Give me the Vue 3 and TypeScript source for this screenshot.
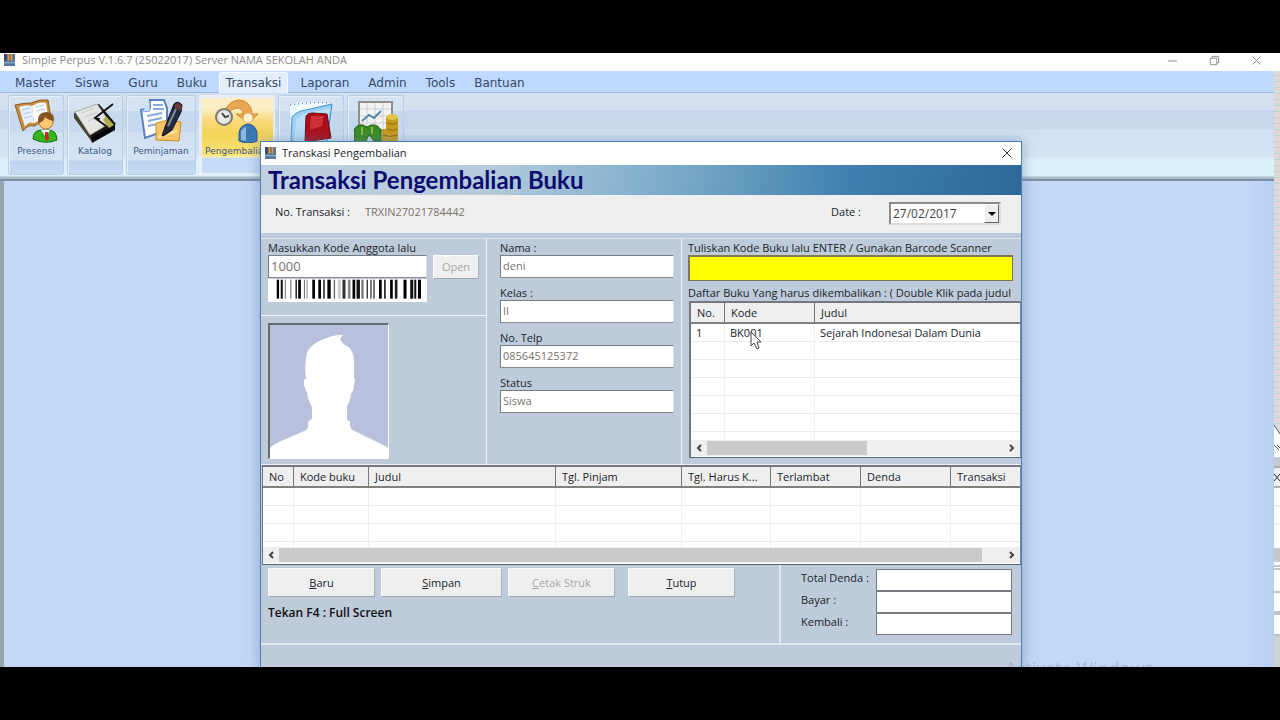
<script setup lang="ts">
import { ref } from 'vue'

const menus: string[] = ['Master', 'Siswa', 'Guru', 'Buku', 'Transaksi', 'Laporan', 'Admin', 'Tools', 'Bantuan']
const activeMenu = ref('Transaksi')

const transactionNo = ref('TRXIN27021784442')
const date = ref('27/02/2017')
const memberCode = ref('1000')
const bookCode = ref('')

interface Field { id: string; label: string; value: string }
const memberFields = ref<Field[]>([
  { id: 'nama', label: 'Nama :', value: 'deni' },
  { id: 'kelas', label: 'Kelas :', value: 'II' },
  { id: 'telp', label: 'No. Telp', value: '085645125372' },
  { id: 'status', label: 'Status', value: 'Siswa' },
])

const totals = ref<Field[]>([
  { id: 'total', label: 'Total Denda :', value: '' },
  { id: 'bayar', label: 'Bayar :', value: '' },
  { id: 'kembali', label: 'Kembali :', value: '' },
])

const loans = [{ no: '1', kode: 'BK001', judul: 'Sejarah Indonesai Dalam Dunia' }]
const loanBlankRows = 6
const returnColumns: string[] = ['No', 'Kode buku', 'Judul', 'Tgl. Pinjam', 'Tgl. Harus K...', 'Terlambat', 'Denda', 'Transaksi']
const returnBlankRows = 4

/* [start, width, shade] of each bar, in thirds of a pixel */
const bars: [number, number, string][] = [
  [26, 7, '#000'], [38, 6, '#111'], [50, 3, '#777'], [66, 4, '#888'], [82, 4, '#111'], [90, 8, '#000'],
  [107, 3, '#666'], [115, 3, '#888'], [132, 8, '#000'], [150, 8, '#000'], [164, 6, '#555'], [177, 10, '#000'],
  [196, 4, '#666'], [208, 9, '#ccc'], [222, 9, '#333'], [238, 8, '#888'], [252, 8, '#000'], [264, 10, '#111'],
  [278, 7, '#777'], [294, 4, '#333'], [305, 4, '#444'], [314, 4, '#333'], [331, 8, '#000'], [346, 5, '#222'],
  [364, 8, '#000'], [378, 8, '#222'], [404, 9, '#000'], [424, 9, '#111'], [436, 6, '#111'], [447, 9, '#000'],
]
</script>

<template>
  <div class="screen">
    <main class="desktop">
      <header class="titlebar">
        <svg class="app-icon" viewBox="0 0 12 13"><rect width="12" height="13" fill="#52779a" /><path d="M0 0h3v7H0z" fill="#3b4a5a" /><path d="M4 0h5v8L6.500 6 4 8z" fill="#d79a55" /><path d="M6 0h1v6H6z" fill="#6a4a30" /><path d="M0 9h12v1H0z" fill="#a9c4d6" /></svg>
        <span class="app-title">Simple Perpus V.1.6.7 (25022017) Server NAMA SEKOLAH ANDA</span>
        <div class="window-buttons">
          <button aria-label="Minimize"><svg viewBox="0 0 12 12"><path d="M1 6.500h10" /></svg></button>
          <button aria-label="Restore"><svg viewBox="0 0 12 12"><path d="M1.500 3.500h7v7h-7zM3.500 3.500v-2h7v7h-2" /></svg></button>
          <button aria-label="Close"><svg viewBox="0 0 12 12"><path d="M1.500 1.500l9 9M10.500 1.500l-9 9" /></svg></button>
        </div>
      </header>

      <nav class="menubar">
        <button v-for="m in menus" :key="m" :class="{ active: m === activeMenu }" @click="activeMenu = m">{{ m }}</button>
      </nav>

      <section class="ribbon">
        <button class="tool tool-presensi">
          <svg viewBox="0 0 44 44">
            <path d="M1 6Q9 4 17 4Q25 0 34 1L38 25Q27 22 20 27Q14 25 9 32Z" fill="#c98c3b" stroke="#8b5a22" />
            <path d="M5 8Q12 5 18 7L20 24Q14 22 11 28Z" fill="#e8f1ff" /><path d="M18 7Q25 2 32 4L35 23Q27 20 20 24Z" fill="#fbfdff" />
            <path d="M8 11l8-2M9 15l8-2M10 19l8-2M21 8l9-2M22 12l9-2" stroke="#a9c4ee" fill="none" />
            <path d="M19 40q0-9 9-9h7q8 1 8 10q-12 5-24-1z" fill="#35b51e" stroke="#16700f" />
            <path d="M27 31h9l-4 7z" fill="#fff" /><path d="M31 33h3l1 7-2 2-2-2z" fill="#c8272a" />
            <circle cx="32" cy="23" r="7" fill="#ffc970" stroke="#b97a32" /><path d="M24 24q-1-11 9-11 8 1 7 9-6-1-9-4-1 5-7 6z" fill="#875423" />
          </svg>
          <span>Presensi</span>
        </button>
        <button class="tool tool-katalog">
          <svg viewBox="0 0 44 44">
            <path d="M1 14L19 38v5L1 19z" fill="#4d4a2c" /><path d="M18 38L42 25v6L19 44z" fill="#050505" />
            <path d="M1 14L26 5l17 20-25 14z" fill="#171713" /><path d="M2 13L24 5l13 19-20 12z" fill="#e3e5e3" stroke="#aaa" />
            <path d="M9 14l12-5M12 18l12-5M15 22l8-4" stroke="#c3c6c5" /><path d="M33 17l8 9-5 3-6-8z" fill="#b5a94f" />
            <path d="M40 5L22 19l11 8" stroke="#151515" stroke-width="2" fill="none" /><path d="M22 19l5 0-1 3z" fill="#000" />
          </svg>
          <span>Katalog</span>
        </button>
        <button class="tool tool-peminjaman">
          <svg viewBox="0 0 44 44">
            <path d="M2 11l9-2V1h14l3 8v22l-22 8z" fill="#fff" stroke="#5b80bd" stroke-width="2" /><path d="M11 2v10l-8 1" fill="#c5dcfa" stroke="#7da2da" />
            <path d="M8 17l15-3M9 22l14-3M9 27l10-2M14 6h10M14 10h11" stroke="#86abe0" stroke-width="2" />
            <path d="M17 24l12-3 13 2-2 19-23-1z" fill="#f5c668" stroke="#c98c2c" /><path d="M19 38l19-6" stroke="#ffe5a3" stroke-width="2" />
            <path d="M23 37l3-9L35 5q4-4 8 1l-1 7-9 18-7 5z" fill="#252a3d" stroke="#10131d" /><path d="M36 5q5-3 7 2l-1 5-6-3z" fill="#6b3a38" /><path d="M29 27l8-17" stroke="#7f8ba8" stroke-width="2" />
          </svg>
          <span>Peminjaman</span>
        </button>
        <button class="tool tool-pengembalian selected">
          <svg viewBox="0 0 44 44">
            <path d="M11 9Q19-2 29 2q8 4 8 13h6l-9 9-13-9h7q0-6-6-6-6 1-8 5z" fill="#e9a654" stroke="#d18a32" />
            <circle cx="9" cy="18" r="8" fill="#d8d8d5" stroke="#817b70" stroke-width="2" /><circle cx="9" cy="18" r="6" fill="#ebebe8" /><path d="M7 14l3 4 4-1" stroke="#4b4b4b" fill="none" stroke-width="2" />
            <path d="M24 42V34q1-8 9-9 8 1 9 9v8q-9 4-18 0z" fill="#3979b7" stroke="#285b90" /><path d="M26 41V33q1-4 5-5v14z" fill="#8fb7dc" /><circle cx="33" cy="19" r="5" fill="#fff0c9" stroke="#d3ad79" />
          </svg>
          <span>Pengembalian</span>
        </button>
        <button class="tool tool-laporan" aria-label="Buku">
          <svg viewBox="0 0 44 44">
            <path d="M1 6Q12 2 40 4l3 2-6 40H2z" fill="#eef8ff" /><path d="M1 6q20-3 38-2" fill="none" stroke="#444" stroke-dasharray="1 3" /><path d="M3 18Q8 12 17 11L43 5l-5 37H2z" fill="#9dd0f3" stroke="#3c92d5" /><path d="M7 20l8-5 26-6-4 33H5z" fill="#b8def8" />
            <path d="M17 17q2-3 6-3l15 1 4 24-26 4z" fill="#a90e19" stroke="#730811" /><path d="M22 17l13 0-2 10-12 4z" fill="#cf3139" />
          </svg>
        </button>
        <button class="tool tool-grafik" aria-label="Grafik">
          <svg viewBox="0 0 44 44">
            <path d="M5 3h33v28H5z" fill="#f2f3f2" stroke="#8d8f88" stroke-width="2" /><path d="M6 10h31M6 17h31M6 24h31M13 4v26M21 4v26M29 4v26" stroke="#ccd1ce" />
            <path d="M8 22l7-6 5 3 7-7" fill="none" stroke="#5787ae" stroke-width="2" /><path d="M0 31q3-6 9-5l4 2 4-2q8-1 10 6v10h-7l-5-6-4 8H0z" fill="#3c8c20" stroke="#21610e" /><path d="M8 28v8M18 28v7" stroke="#86b950" stroke-width="2" />
            <path d="M32 18h12v24H28V30h4z" fill="#c99b1c" /><ellipse cx="38" cy="18" rx="6" ry="3" fill="#e2c44a" /><path d="M33 24q6 3 10 0M33 30q6 3 10 0M29 36q8 3 14 0" stroke="#8e6a0c" fill="none" />
          </svg>
        </button>
      </section>

      <div class="client"></div>
      <svg class="edge" viewBox="0 0 6 596" preserveAspectRatio="none">
        <defs><pattern id="lines" width="6" height="6" patternUnits="userSpaceOnUse"><rect width="6" height="6" fill="#d9dcd6" /><rect width="6" height="2" fill="#e6d5d5" /><rect y="4" width="6" height="1" fill="#c8cdd2" /></pattern></defs>
        <rect width="6" height="354" fill="url(#lines)" /><path d="M0 354h6v242H0z" fill="#fff" /><path d="M0 354l6 9v-9z" fill="#ddd" /><path d="M0 354l6 9M0 374l5 5M3 374l3 3" stroke="#555" fill="none" />
        <path d="M0 386h6v9H0z" fill="#c3cbd0" /><path d="M0 396h6v20H0z" fill="#eee" /><path d="M0 396h6M0 416h6" stroke="#666" /><path d="M0 403l6 7M0 410l6-7" stroke="#333" />
        <path d="M0 435h6M0 453h6" stroke="#ddd" /><path d="M0 477h6v14H0z" fill="#c8c8c8" /><path d="M0 495h6M0 498h6M0 521h6M0 541h6M0 543h6M0 564h6" stroke="#888" /><path d="M0 565h6v31H0z" fill="#cdd2d4" />
      </svg>

      <section class="dialog" role="dialog" aria-label="Transkasi Pengembalian">
        <header class="dialog-title">
          <svg class="app-icon" viewBox="0 0 12 13"><rect width="12" height="13" fill="#52779a" /><path d="M0 0h3v7H0z" fill="#3b4a5a" /><path d="M4 0h5v8L6.500 6 4 8z" fill="#d79a55" /><path d="M6 0h1v6H6z" fill="#6a4a30" /><path d="M0 9h12v1H0z" fill="#a9c4d6" /></svg>
          <span>Transkasi Pengembalian</span>
          <button aria-label="Close dialog"><svg viewBox="0 0 12 12"><path d="M1.500 1.500l9 9M10.500 1.500l-9 9" /></svg></button>
        </header>
        <h1 class="banner">Transaksi Pengembalian Buku</h1>

        <div class="info">
          <span>No. Transaksi :</span><output>{{ transactionNo }}</output>
          <label class="date-label" for="date">Date :</label>
          <div class="date"><input id="date" v-model="date"><button aria-label="Pick a date"><svg viewBox="0 0 8 4"><path d="M0 0h8L4 4z" /></svg></button></div>
        </div>

        <div class="panels">
          <div class="member">
            <div class="member-code">
              <label for="member">Masukkan Kode Anggota lalu</label>
              <div class="code-row"><input id="member" v-model="memberCode" class="box dim"><button class="push" disabled>Open</button></div>
              <svg class="barcode" viewBox="0 0 474 69" preserveAspectRatio="none"><rect v-for="(b, i) in bars" :key="i" :x="b[0]" y="2" :width="b[1]" height="57" :fill="b[2]" /></svg>
            </div>
            <div class="photo-pane">
              <svg class="photo" viewBox="0 0 118 132" preserveAspectRatio="none">
                <rect width="118" height="132" fill="#b8c0dc" />
                <path d="M0 132V122Q4 118 14 114L37 104Q39 99 38 96L42 93V82Q38 75 37 67L34 60V54L36 53Q34 40 37 27Q42 18 54 14Q65 9 73 10L70 14Q72 19 79 22Q85 28 84 41V53L85 54L83 65L81 68Q80 76 77 81V94L80 96Q80 102 82 104L111 118Q116 120 118 122V132Z" fill="#fff" />
              </svg>
            </div>
          </div>

          <div class="details">
            <div v-for="f in memberFields" :key="f.id" class="field"><label :for="f.id">{{ f.label }}</label><input :id="f.id" v-model="f.value" class="box"></div>
          </div>

          <div class="books">
            <div class="books-form">
              <label for="book">Tuliskan Kode Buku lalu ENTER / Gunakan Barcode Scanner</label>
              <input id="book" v-model="bookCode" class="box scan">
              <p>Daftar Buku Yang harus dikembalikan : ( Double Klik pada judul</p>
            </div>
            <div class="list loans">
              <div class="table-clip">
                <table>
                  <colgroup><col class="l1"><col class="l2"><col></colgroup>
                  <thead><tr><th>No.</th><th>Kode</th><th>Judul</th></tr></thead>
                  <tbody>
                    <tr v-for="l in loans" :key="l.no"><td>{{ l.no }}</td><td>{{ l.kode }}</td><td>{{ l.judul }}</td></tr>
                    <tr v-for="n in loanBlankRows" :key="'b' + n"><td></td><td></td><td></td></tr>
                  </tbody>
                </table>
              </div>
              <div class="scroll">
                <button aria-label="Scroll left"><svg viewBox="0 0 6 8"><path d="M5 1L2 4l3 3" /></svg></button>
                <div class="track"><div class="thumb half"></div></div>
                <button aria-label="Scroll right"><svg viewBox="0 0 6 8"><path d="M1 1l3 3-3 3" /></svg></button>
              </div>
            </div>
          </div>
        </div>

        <div class="list returns">
          <div class="table-clip">
            <table>
              <colgroup><col v-for="(c, i) in returnColumns" :key="c" :class="'r' + i"></colgroup>
              <thead><tr><th v-for="c in returnColumns" :key="c">{{ c }}</th></tr></thead>
              <tbody><tr v-for="n in returnBlankRows" :key="n"><td v-for="c in returnColumns" :key="c"></td></tr></tbody>
            </table>
          </div>
          <div class="scroll">
            <button aria-label="Scroll left"><svg viewBox="0 0 6 8"><path d="M5 1L2 4l3 3" /></svg></button>
            <div class="track"><div class="thumb wide"></div></div>
            <button aria-label="Scroll right"><svg viewBox="0 0 6 8"><path d="M1 1l3 3-3 3" /></svg></button>
          </div>
        </div>

        <footer class="bottom">
          <div class="actions">
            <div class="buttons">
              <button class="push"><u>B</u>aru</button>
              <button class="push big"><u>S</u>impan</button>
              <button class="push" disabled><u>C</u>etak Struk</button>
              <button class="push last"><u>T</u>utup</button>
            </div>
            <p class="hint">Tekan F4 : Full Screen</p>
          </div>
          <div class="totals">
            <div v-for="t in totals" :key="t.id" class="total"><label :for="t.id">{{ t.label }}</label><input :id="t.id" v-model="t.value"></div>
          </div>
        </footer>
      </section>

      <svg class="cursor" viewBox="0 0 12 19"><path d="M1 1v14l3-3 3 6 2-1-2-6h4z" fill="#fff" stroke="#444" /></svg>
      <div class="watermark">Activate Windows</div>
    </main>
  </div>
</template>

<style>
body { background: #000; }
</style>

<style scoped>
* { box-sizing: border-box; }
button { font: inherit; padding: 0; border: 0; background: none; color: inherit; }
input { min-width: 0; border-radius: 0; outline: 0; font: inherit; color: inherit; }
svg { display: block; }
p, h1 { margin: 0; }

.screen { height: 100vh; padding: 53px 0; background: #000; }
.desktop { position: relative; height: 100%; overflow: hidden; display: flex; flex-direction: column; background: #c3d7f6; font: 11px/14px "Open Sans", "Noto Sans", sans-serif; color: #20242c; }

.titlebar { display: flex; align-items: center; flex: none; height: 18px; padding: 0 18px 4px 4px; background: #fff; color: #8b8b8b; }
.app-icon { width: 11px; height: 12px; margin-right: 7px; }
.app-title { flex: 1; }
.window-buttons { display: flex; gap: 31px; }
.window-buttons svg { width: 11px; height: 11px; fill: none; stroke: #8a8a8a; }

.menubar { display: flex; flex: none; height: 22px; padding: 1px 8px 0; background: #bfd9fe; border-bottom: 1px solid #9db8da; font: 12px/20px "DejaVu Sans", sans-serif; color: #35496b; }
.menubar button { height: 21px; padding: 0 6px; margin-right: 5px; border: 1px solid transparent; border-bottom: 0; }
.menubar button.active { background: #e4eefa; border-color: #f4faff; border-radius: 3px 3px 0 0; }

.ribbon { display: flex; flex: none; gap: 3px; height: 88px; padding: 2px 8px 6px; border-bottom: 2px solid #7c8ea3; background: linear-gradient(#d4e0f0 0 17px, #c6d6ec 17px, #c8d9ea 36px, #d1e0f0 36px, #d4e4f3 64px, #dcf0fc 66px, #dcf0fc 83px, #a9bcca 84px); }
.tool { display: flex; flex-direction: column; align-items: center; height: 80px; padding-top: 3px; border: 1px solid #b8cde6; border-radius: 3px; box-shadow: inset 1px 1px #e6f0fa; background: linear-gradient(#d5e2f2 0 15px, #c6d8ed 15px, #c7d9ee 36px, #d1e0f1 36px, #d5e4f4 64px, #bfd5ef 65px, #c4daf2); font: 9px/12px "DejaVu Sans", sans-serif; color: #3d5887; overflow: hidden; }
.tool svg { width: 44px; height: 44px; flex: none; margin-bottom: 2px; }
.tool-presensi, .tool-katalog { width: 56px; }
.tool-peminjaman { width: 70px; }
.tool-pengembalian { width: 76px; }
.tool-laporan { width: 66px; }
.tool-grafik { width: 57px; }
.selected { border: 2px solid #e9eef2; padding-top: 2px; background: linear-gradient(#fbeec5 0 12px, #f9dc83 22px, #f6d356 36px, #f8e477 58px, #fbf0ae 60px, #c6dcf6 61px); }

.client { flex: 1; border-left: 4px solid #96a4b1; border-right: 6px solid #a9c8f2; background: linear-gradient(90deg, #c3d7f6 98%, #b8cff3); }
.edge { position: absolute; right: 0; top: 18px; width: 6px; height: 596px; }

.dialog { position: absolute; left: 260px; right: 258px; top: 88px; bottom: -2px; display: flex; flex-direction: column; border: 1px solid #4d81ab; background: #becbda; box-shadow: 0 0 13px #5678a688; }
.dialog-title { display: flex; align-items: center; flex: none; height: 23px; padding: 0 8px 1px 4px; background: #fff; }
.dialog-title .app-icon { margin-right: 6px; }
.dialog-title span { flex: 1; }
.dialog-title button svg { width: 12px; height: 12px; fill: none; stroke: #333; }
.banner { flex: none; height: 30px; padding-left: 7px; background: linear-gradient(100deg, #c0d0e1, #b4cadc 30%, #78a9c8 55%, #3d7fae 78%, #2e6899); font: 700 24px/30px Lato, sans-serif; color: #0b0b70; }
.info { display: flex; align-items: flex-start; flex: none; height: 38px; padding: 10px 20px 0 14px; background: #efefef; }
.info output { margin-left: 15px; color: #77736d; }
.date-label { margin-left: auto; }
.date { display: flex; width: 112px; height: 23px; margin: -3px 0 0 28px; border: 2px solid #8a8a88; border-right-color: #ddd; border-bottom-color: #ddd; background: #fff; font-size: 12px; color: #444; }
.date input { flex: 1; width: 0; padding: 0 2px; border: 0; background: transparent; }
.date button { width: 15px; background: #efefef; border: 1px solid #fff; border-right-color: #666; border-bottom-color: #666; }
.date svg { width: 8px; height: 4px; margin: auto; }

.panels { display: grid; grid-template-columns: 226px 195px 1fr; flex: none; height: 227px; margin-top: 5px; border-top: 1px solid #dce4ec; border-bottom: 1px solid #eef3f7; }
.panels label, .panels p { display: block; height: 16px; line-height: 18px; white-space: nowrap; }
.member { border-right: 1px solid #eef3f7; }
.member-code { height: 77px; padding-left: 7px; border-bottom: 1px solid #eef3f7; }
.box { display: block; height: 23px; padding: 0 2px 2px; border: 1px solid #777d82; border-right-color: #d8dce0; border-bottom-color: #888; background: #fff; color: #77736d; }
.code-row { display: flex; gap: 6px; }
.code-row .box { width: 159px; font-size: 13px; }
.push { height: 29px; border: 1px solid #fafafa; border-right-color: #aab2ba; border-bottom-color: #9ca5ae; background: #efefef; }
.push:disabled { color: #a5a7a9; }
.code-row .push { width: 46px; height: 24px; }
.barcode { width: 159px; height: 23px; background: #fff; }
.photo-pane { padding: 7px; }
.photo { width: 121px; height: 136px; border: 1px solid #666c74; border-width: 2px 1px 1px 2px; border-right-color: #fff; border-bottom-color: #fff; }
.details { padding-left: 13px; border-right: 1px solid #eef3f7; }
.field { height: 45px; width: 174px; }
.field .box { width: 100%; }
.books { min-width: 0; display: flex; flex-direction: column; }
.books-form { padding: 0 8px 0 6px; height: 62px; }
.books-form .scan { width: 100%; height: 26px; background: #ff0; border: 2px solid #7b7b4d; border-right-width: 1px; border-bottom-width: 1px; }
.books-form p { margin-top: 3px; overflow: hidden; }

.list { border: 2px solid #74787c; border-right: 1px solid #789; border-bottom: 1px solid #567; background: #fff; display: flex; flex-direction: column; }
.table-clip { flex: 1; min-height: 0; overflow: hidden; }
table { width: 100%; table-layout: fixed; border-collapse: separate; border-spacing: 0; }
th { height: 21px; padding: 1px 0 0 6px; border-right: 1px solid #777; border-bottom: 2px solid #80807e; background: #efefef; font-weight: 400; text-align: left; white-space: nowrap; overflow: hidden; }
td { height: 18px; padding: 0 0 0 5px; border-right: 1px solid #eee; border-bottom: 1px solid #e9ebed; line-height: 14px; white-space: nowrap; }
th:last-child, td:last-child { border-right: 0; }
.loans { height: 157px; margin-left: 7px; }
.l1 { width: 34px; } .l2 { width: 90px; }
.returns { height: 100px; flex: none; margin-left: 1px; border-left-width: 1px; }
.r0 { width: 31px; } .r1 { width: 75px; } .r2 { width: 187px; } .r3 { width: 126px; } .r4 { width: 89px; } .r5, .r6 { width: 90px; }
.scroll { display: flex; flex: none; height: 16px; margin-bottom: 1px; background: #efefef; }
.scroll button { width: 16px; }
.scroll svg { width: 6px; height: 8px; margin: auto; fill: none; stroke: #444; stroke-width: 2; }
.track { flex: 1; padding: 1px 0; }
.thumb { height: 14px; background: #cacaca; }
.half { width: 54%; } .wide { width: 97%; }

.bottom { display: flex; flex: none; height: 80px; border-bottom: 2px solid #dfe7ee; }
.actions { flex: 1; padding: 3px 0 0 7px; }
.buttons { display: flex; gap: 6px; }
.buttons .push { width: 107px; }
.buttons .big { width: 121px; }
.buttons .last { margin-left: 7px; }
.hint { margin-top: 9px; font-size: 12px; font-weight: 600; color: #111; }
.totals { width: 242px; padding: 4px 9px 0 20px; border-left: 2px solid #dfe7ee; }
.total { display: flex; justify-content: space-between; height: 22px; }
.total label { line-height: 17px; }
.total input { width: 136px; height: 22px; border: 1px solid #777d82; background: #fff; }

.cursor { position: absolute; left: 750px; top: 278px; width: 12px; height: 19px; }
.watermark { position: absolute; right: 127px; bottom: -13px; font: 18px/24px "Open Sans", sans-serif; color: #8797ae77; }
</style>
